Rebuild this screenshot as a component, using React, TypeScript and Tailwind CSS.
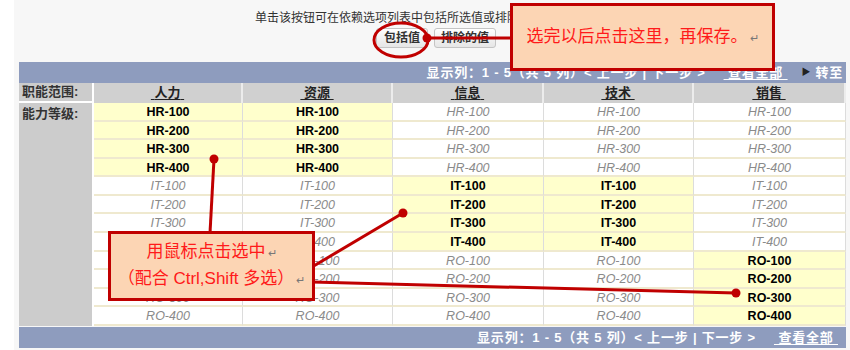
import React from 'react';

const groups = ['HR', 'IT', 'RO'];
const levels = ['100', '200', '300', '400'];
const heads = ['人力', '资源', '信息', '技术', '销售'];
// which columns are picked for each group
const picked: Record<string, number[]> = { HR: [0, 1], IT: [2, 3], RO: [4] };

function NavText({ goto }: { goto?: boolean }) {
	return (
		<div className="flex items-center justify-end h-full text-white font-bold text-[13px] tracking-[0.8px] whitespace-pre">
			<span>显示列：1 - 5（共 5 列）&lt; 上一步 | 下一步 &gt;</span>
			<span className="ml-[18px] underline underline-offset-2">&nbsp;查看全部&nbsp;</span>
			{goto && (
				<>
					<span className="ml-[14px] text-[9px] text-[#222]">▶</span>
					<span className="ml-[4px]">转至</span>
				</>
			)}
		</div>
	);
}

function Callout({ className, children }: { className: string; children: React.ReactNode }) {
	return (
		<div className={`absolute border-[3px] border-[#c00000] bg-[#fcd5b4] text-[#ff1a1a] text-[17px] flex flex-col items-center justify-center leading-[25px] ${className}`}>
			{children}
		</div>
	);
}

const Ret = () => <span className="text-[11px] text-[#777] ml-[2px]">↵</span>;

export default function App() {
	return (
		<div
			className="relative w-[850px] h-[350px] overflow-hidden bg-white"
			style={{ fontFamily: '"Liberation Sans", Arial, "Noto Sans CJK SC", sans-serif' }}
		>
			<div className="ml-[14px] h-full bg-[#f7f7f7] pt-[10px]">
				<div className="pl-[241px] text-[12px] text-[#333] leading-[16px] whitespace-nowrap">
					单击该按钮可在依赖选项列表中包括所选值或排除所选值。
				</div>
				<div className="flex gap-[6px] pl-[362px] mt-[2px]">
					<button className="h-[20px] px-[7px] text-[12px] font-bold text-[#333] rounded-[3px] border border-[#c4c4c4] bg-gradient-to-b from-white to-[#e6e6e6]">
						包括值
					</button>
					<button className="h-[20px] px-[6px] text-[12px] font-bold text-[#333] rounded-[3px] border border-[#c4c4c4] bg-gradient-to-b from-white to-[#e6e6e6]">
						排除的值
					</button>
				</div>

				<div className="ml-[5px] mt-[14px] w-[827px]">
					<div className="h-[21px] bg-[#8e9cbe] pr-[3px]">
						<NavText goto />
					</div>
					<div className="grid grid-cols-[75px_149px_150px_151px_150px_152px] grid-rows-[20px_repeat(12,18.58px)]">
						<div className="bg-[#cccccc] border-r-2 border-b-2 border-white pl-[3px] text-[13px] font-bold text-[#333] flex items-center">
							职能范围:
						</div>
						{heads.map((h) => (
							<div key={h} className="bg-[#d0d0d0] border-r-2 border-[#ececec] flex items-center justify-center text-[13px] font-bold text-[#222]">
								<span className="underline underline-offset-2">&nbsp;{h}&nbsp;</span>
							</div>
						))}
						<div className="row-span-12 bg-[#cccccc] border-r-2 border-white pl-[3px] pt-[2px] text-[13px] font-bold text-[#333] leading-[17px]">
							能力等级:
						</div>
						{groups.flatMap((g) =>
							levels.flatMap((l) =>
								heads.map((h, c) => {
									const on = picked[g].includes(c);
									return (
										<div
											key={g + l + c}
											className={`border-b-2 border-b-[#efe9cf] border-r border-r-[#dcdcdc] flex items-center justify-center pt-[2px] text-[12.5px] ${
												on ? 'bg-[#ffffcc] font-bold text-black' : 'bg-white italic text-[#8a8a8a]'
											}`}
										>
											{g}-{l}
										</div>
									);
								})
							)
						)}
					</div>
					<div className="h-[21px] mt-[1px] bg-[#8e9cbe] pr-[8px]">
						<NavText />
					</div>
				</div>
			</div>

			{/* annotation lines */}
			<svg className="absolute inset-0 pointer-events-none" width="850" height="350">
				<g stroke="#c00000" strokeWidth="3" fill="none">
					<ellipse cx="401" cy="40" rx="27" ry="17" />
					<line x1="427" y1="38" x2="512" y2="38" />
					<line x1="214" y1="159" x2="210" y2="233" />
					<line x1="403" y1="213" x2="312" y2="267" />
					<line x1="312" y1="282" x2="736" y2="293" />
				</g>
				<g fill="#c00000">
					<circle cx="427" cy="38" r="4.5" />
					<circle cx="214" cy="159" r="4.5" />
					<circle cx="403" cy="213" r="4.5" />
					<circle cx="736" cy="293" r="4.5" />
				</g>
			</svg>

			<Callout className="left-[510px] top-[3px] w-[265px] h-[68px]">
				<div>
					选完以后点击这里，再保存。
					<Ret />
				</div>
			</Callout>
			<Callout className="left-[108px] top-[231px] w-[207px] h-[70px]">
				<div>
					用鼠标点击选中
					<Ret />
				</div>
				<div>
					（配合 Ctrl,Shift 多选）
					<Ret />
				</div>
			</Callout>
		</div>
	);
}
